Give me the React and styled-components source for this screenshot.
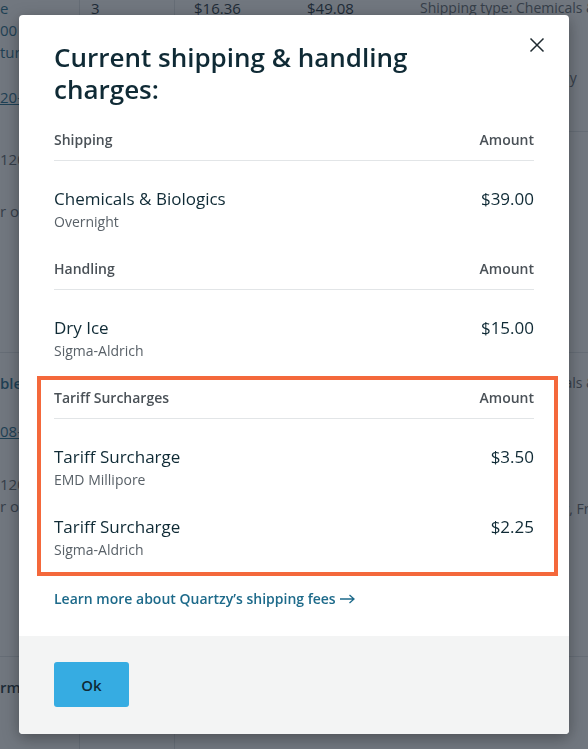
import styled, { createGlobalStyle } from 'styled-components'

const GlobalStyle = createGlobalStyle`
  html, body {
    margin: 0;
    padding: 0;
  }
  body {
    font-family: "Open Sans", "Noto Sans", sans-serif;
    background: #ffffff;
    overflow: hidden;
  }
`

/* ---------- background order table ---------- */

const Page = styled.div`
  height: 749px;
  overflow: hidden;
`

const Table = styled.div`
  margin-top: -22px;
`

const OrderRow = styled.div`
  display: grid;
  grid-template-columns: 79px 95px 116px 130px 1fr;
  height: ${p => p.$height}px;
  border-bottom: 1px solid #dfe3e6;
`

const Cell = styled.div`
  display: flex;
  flex-direction: column;
  padding: 19px 0 0 ${p => p.$pad || 0}px;
  border-left: ${p => (p.$divider ? '1px solid #dfe3e6' : 'none')};
  font-size: ${p => p.$size || 15}px;
  line-height: 22px;
  white-space: nowrap;
  color: #2f3d46;
  min-width: 0;
  overflow: hidden;
`

const BgLine = styled.span`
  display: block;
  margin-top: ${p => p.$gap || 0}px;
  color: ${p => (p.$tone === 'link' ? '#1d6a8a' : p.$tone === 'muted' ? '#5d656b' : '#1b2e38')};
  font-weight: ${p => (p.$bold ? 600 : 400)};
  text-decoration: ${p => (p.$underline ? 'underline' : 'none')};
`

const SubDivider = styled.div`
  margin: 10px 0 9px -10px;
  border-top: 1px solid #dfe3e6;
`

/* ---------- modal ---------- */

const Overlay = styled.div`
  position: fixed;
  inset: 0;
  background: rgba(33, 43, 54, 0.64);
  display: flex;
  align-items: center;
  justify-content: center;
`

const Modal = styled.div`
  position: relative;
  width: 550px;
  background: #ffffff;
  border-radius: 4px;
  box-shadow: 0 4px 16px rgba(0, 0, 0, 0.35);
  overflow: hidden;
`

const Body = styled.div`
  padding: 26px 35px 27px;
`

const Title = styled.h2`
  margin: 0 0 25px;
  max-width: 420px;
  font-size: 26px;
  line-height: 32px;
  font-weight: 600;
  color: #0f2a35;
`

const CloseButton = styled.button`
  position: absolute;
  top: 22px;
  right: 24px;
  width: 16px;
  height: 16px;
  padding: 0;
  border: none;
  background: none;
  cursor: pointer;
  display: flex;
`

const Section = styled.section`
  padding-bottom: ${p => (p.$highlight ? 12 : 27)}px;
  ${p =>
    p.$highlight &&
    `
    margin: -12px -24px 0 -17px;
    padding: 8px 20px 12px 13px;
    border: 4px solid #f4683b;
  `}
`

const HeaderRow = styled.div`
  display: flex;
  justify-content: space-between;
  padding-bottom: 10px;
  border-bottom: 1px solid #e2e5e7;
  font-size: 14px;
  line-height: 20px;
  font-weight: 600;
  color: #4a5157;
`

const ItemList = styled.div`
  display: flex;
  flex-direction: column;
  gap: 26px;
  padding-top: 27px;
`

const Item = styled.div`
  display: flex;
  justify-content: space-between;
  align-items: flex-start;
`

const ItemText = styled.div`
  display: flex;
  flex-direction: column;
  gap: 2px;
`

const ItemTitle = styled.span`
  font-size: 17px;
  line-height: 22px;
  color: #0f2a35;
`

const ItemSub = styled.span`
  font-size: 14px;
  line-height: 20px;
  color: #596168;
`

const Price = styled.span`
  font-size: 17px;
  line-height: 22px;
  color: #0f2a35;
`

const LearnLink = styled.a`
  display: flex;
  align-items: center;
  gap: 4px;
  margin-top: 13px;
  font-size: 14px;
  line-height: 20px;
  font-weight: 600;
  color: #1d6a8a;
  text-decoration: none;
`

const Footer = styled.div`
  background: #f3f4f4;
  padding: 26px 35px 27px;
`

const OkButton = styled.button`
  width: 75px;
  height: 45px;
  border: none;
  border-radius: 3px;
  background: #36ace2;
  font-family: inherit;
  font-size: 15px;
  font-weight: 600;
  color: #0f2a35;
  cursor: pointer;
`

const sections = [
  {
    label: 'Shipping',
    items: [{ title: 'Chemicals & Biologics', sub: 'Overnight', price: '$39.00' }],
  },
  {
    label: 'Handling',
    items: [{ title: 'Dry Ice', sub: 'Sigma-Aldrich', price: '$15.00' }],
  },
  {
    label: 'Tariff Surcharges',
    highlight: true,
    items: [
      { title: 'Tariff Surcharge', sub: 'EMD Millipore', price: '$3.50' },
      { title: 'Tariff Surcharge', sub: 'Sigma-Aldrich', price: '$2.25' },
    ],
  },
]

function Background() {
  return (
    <Page>
      <Table>
        <OrderRow $height={374}>
          <Cell>
            <BgLine $tone="link">e</BgLine>
            <BgLine $tone="link">00 mL</BgLine>
            <BgLine $tone="link">ture Tubes</BgLine>
            <BgLine $tone="link" $underline $gap={23}>20-1045</BgLine>
            <BgLine $tone="muted" $gap={40}>120 per case</BgLine>
            <BgLine $tone="muted" $gap={30}>r order</BgLine>
          </Cell>
          <Cell $divider $pad={11}>
            <BgLine>3</BgLine>
          </Cell>
          <Cell $divider $pad={19}>
            <BgLine>$16.36</BgLine>
          </Cell>
          <Cell $pad={17}>
            <BgLine>$49.08</BgLine>
          </Cell>
          <Cell $pad={0} $size={14}>
            <BgLine $tone="muted">Shipping type: Chemicals &amp; Biologics</BgLine>
            <BgLine $tone="muted">Overnight</BgLine>
            <BgLine $tone="muted" $gap={26}>Ships next business Day</BgLine>
            <BgLine $tone="muted" $gap={10}>Carrier: FedEx, USA</BgLine>
            <SubDivider />
            <BgLine $bold>Below order min</BgLine>
            <BgLine $tone="muted" $gap={14}>Min: $100.00</BgLine>
            <BgLine $tone="muted">Met on this shipment</BgLine>
          </Cell>
        </OrderRow>
        <OrderRow $height={303}>
          <Cell>
            <BgLine $tone="link" $bold>ble Tips</BgLine>
            <BgLine $tone="link" $underline $gap={26}>08-2231</BgLine>
            <BgLine $tone="muted" $gap={31}>120 per case</BgLine>
            <BgLine $tone="muted">r order</BgLine>
          </Cell>
          <Cell $divider $pad={11} />
          <Cell $divider $pad={19} />
          <Cell $pad={17} />
          <Cell $pad={0} $size={14}>
            <BgLine $tone="muted">Shipping type: Chemicals &amp; Biologics</BgLine>
            <BgLine $bold $gap={28}>Below the order min</BgLine>
            <BgLine $tone="muted" $gap={24}>Ships in 2-3 days, May</BgLine>
            <BgLine $tone="muted" $gap={8}>Vendor: Thermo Fisher, Fr</BgLine>
          </Cell>
        </OrderRow>
        <OrderRow $height={200}>
          <Cell>
            <BgLine $bold>rm</BgLine>
          </Cell>
          <Cell $divider />
          <Cell $divider />
          <Cell />
          <Cell />
        </OrderRow>
      </Table>
    </Page>
  )
}

export default function App() {
  return (
    <>
      <GlobalStyle />
      <Background />
      <Overlay>
        <Modal>
          <CloseButton aria-label="Close">
            <svg width="16" height="16" viewBox="0 0 16 16">
              <path d="M1.5 1.5 L14.5 14.5 M14.5 1.5 L1.5 14.5" stroke="#1f2a30" strokeWidth="1.5" fill="none" />
            </svg>
          </CloseButton>
          <Body>
            <Title>Current shipping &amp; handling charges:</Title>
            {sections.map(section => (
              <Section key={section.label} $highlight={section.highlight}>
                <HeaderRow>
                  <span>{section.label}</span>
                  <span>Amount</span>
                </HeaderRow>
                <ItemList>
                  {section.items.map((item, i) => (
                    <Item key={i}>
                      <ItemText>
                        <ItemTitle>{item.title}</ItemTitle>
                        <ItemSub>{item.sub}</ItemSub>
                      </ItemText>
                      <Price>{item.price}</Price>
                    </Item>
                  ))}
                </ItemList>
              </Section>
            ))}
            <LearnLink href="#">
              Learn more about Quartzy’s shipping fees
              <svg width="15" height="10" viewBox="0 0 15 10">
                <path d="M0 5 H14 M9.5 1 L14 5 L9.5 9" stroke="#1d6a8a" strokeWidth="1.3" fill="none" />
              </svg>
            </LearnLink>
          </Body>
          <Footer>
            <OkButton>Ok</OkButton>
          </Footer>
        </Modal>
      </Overlay>
    </>
  )
}
